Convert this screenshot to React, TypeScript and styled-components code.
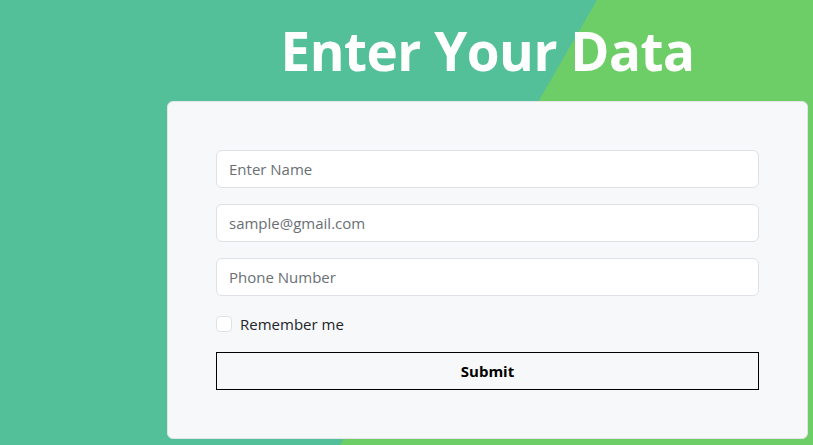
import React from "react";
import styled, { createGlobalStyle } from "styled-components";

const Global = createGlobalStyle`
  html, body { margin: 0; padding: 0; }
  body {
    font-family: "Open Sans", "Noto Sans", sans-serif;
    background: linear-gradient(120deg, #53c099 0%, #53c099 55.8%, #6dce67 55.8%, #6dce67 100%);
    min-height: 100vh;
    overflow: hidden;
  }
  * { box-sizing: border-box; }
`;

const Page = styled.div`
  min-height: 100vh;
  display: flex;
  flex-direction: column;
  padding-left: 167px;
`;

const Column = styled.div`
  width: 641px;
  display: flex;
  flex-direction: column;
  align-items: center;
`;

const Title = styled.h1`
  margin: 13px 0 0;
  font-size: 53px;
  line-height: 76px;
  font-weight: 700;
  color: #ffffff;
  letter-spacing: -0.5px;
`;

const Card = styled.form`
  margin-top: 12px;
  width: 100%;
  background: #f7f8fa;
  border: 1px solid #e2e5e8;
  border-radius: 6px;
  padding: 48px;
  display: flex;
  flex-direction: column;
`;

const Input = styled.input`
  display: block;
  width: 100%;
  height: 38px;
  padding: 6px 12px;
  font-family: "Open Sans", "Noto Sans", sans-serif;
  font-size: 15px;
  color: #212529;
  background: #ffffff;
  border: 1px solid #dee2e6;
  border-radius: 6px;
  margin-bottom: 16px;
  outline: none;
  &::placeholder { color: #6a6f74; }
`;

const CheckRow = styled.label`
  display: flex;
  align-items: center;
  gap: 8px;
  height: 24px;
  margin: 0 0 16px;
  font-size: 15px;
  color: #212529;
`;

const Check = styled.span`
  width: 16px;
  height: 16px;
  border: 1px solid #dee2e6;
  border-radius: 4px;
  background: #ffffff;
`;

const Submit = styled.button`
  width: 100%;
  height: 38px;
  background: transparent;
  border: 1px solid #000000;
  font-family: "Open Sans", "Noto Sans", sans-serif;
  font-weight: 700;
  font-size: 15px;
  color: #000000;
`;

export default function App() {
  return (
    <>
      <Global />
      <Page>
        <Column>
          <Title>Enter Your Data</Title>
          <Card onSubmit={(e) => e.preventDefault()}>
            <Input placeholder="Enter Name" />
            <Input placeholder="sample@gmail.com" />
            <Input placeholder="Phone Number" />
            <CheckRow>
              <Check />
              Remember me
            </CheckRow>
            <Submit type="submit">Submit</Submit>
          </Card>
        </Column>
      </Page>
    </>
  );
}
